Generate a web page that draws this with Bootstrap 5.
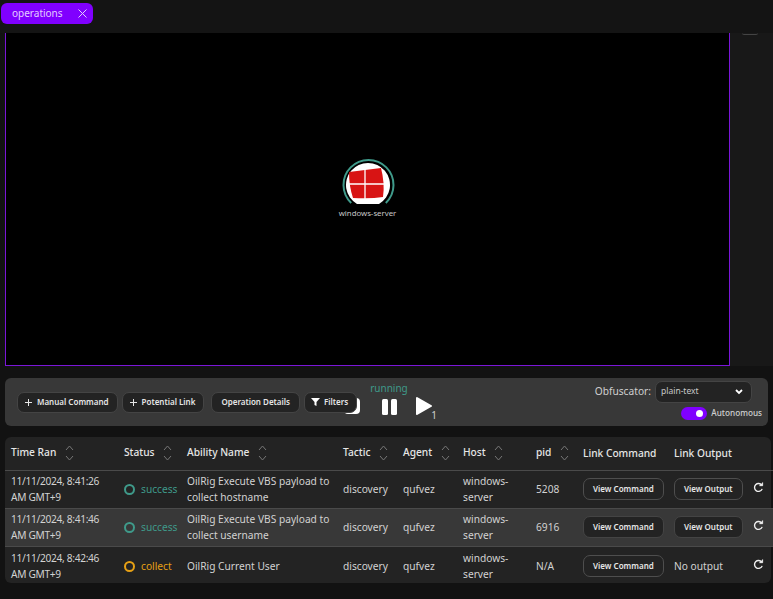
<!doctype html>
<html lang="en">
<head>
<meta charset="utf-8">
<title>operations</title>
<link href="https://cdn.jsdelivr.net/npm/bootstrap@5.3.3/dist/css/bootstrap.min.css" rel="stylesheet">
<style>
  html, body { height:100%; overflow:hidden; }
  body { background:#121212; color:#dbdbdb; font-family:"Noto Sans", "Liberation Sans", sans-serif; font-size:11px; }
  .top-strip { height:33px; background:#141414; padding:3px 0 0 1px; }
  .op-tab { width:92px; height:21px; background:#8000ff; color:#e4ccff; border-radius:6px; padding:0 6px 0 11px; font-size:10px; }
  .graph-row { height:333px; margin-left:5px; }
  .graph-canvas { width:725px; background:#000; border:solid #7a16d8; border-width:0 1px 1px 1px; }
  .graph-side { flex:1; background:#181818; }
  .side-nub { width:16px; height:2px; margin-left:12px; border-bottom:1px solid #444; border-radius:0 0 8px 8px; }
  .node-label { font-size:7.8px; color:#c8c8c8; line-height:10px; margin-top:3px; }
  .node-box { margin-top:-22px; }
  .ctl-panel { margin:12px 5px 0 5px; height:48px; background:#383838; border-radius:6px; padding:0 6px 0 12px; }
  .ctl-btn { position:relative; z-index:1; background:#232323; border:1px solid #444; border-radius:7px; color:#e6e6e6; height:21px; font-size:8px; font-weight:600; padding:0 8px 0 6px; line-height:1; }
  .ctl-btn.plain { padding:0 9px; margin-left:3px; }
  .run-box { position:relative; width:100px; height:48px; }
  .run-text { position:absolute; left:13px; top:4px; color:#3f9a8a; font-size:10px; line-height:13px; }
  .run-sq { position:absolute; left:-13px; top:20px; width:16px; height:16px; background:#fff; border-radius:4px; }
  .run-pause { position:absolute; left:25px; top:21px; }
  .run-play { position:absolute; left:58px; top:18px; }
  .run-num { position:absolute; left:74px; top:31px; font-size:10px; line-height:13px; color:#cfcfcf; }
  .obf-col { padding-bottom:4px; }
  .obf-label { color:#cfcfcf; font-size:10.2px; }
  .obf-select { width:97px; height:22px; margin-right:10px; background:#232323; border:1px solid #444; border-radius:7px; color:#c9c9c9; font-size:8.5px; padding:0 8px 0 5px; }
  .auto-switch { width:26px; height:13px; background:#8000ff; border-radius:7px; position:relative; }
  .auto-switch::after { content:""; position:absolute; right:4px; top:3px; width:7px; height:7px; background:#fff; border-radius:50%; }
  .auto-label { font-size:8.2px; font-weight:500; color:#d0d0d0; }
  .tbl-wrap { margin:11px 2px 0 5px; background:#232323; border-radius:6px; height:146px; }
  .tbl-grid { width:768px; table-layout:fixed; border-collapse:collapse; color:#d2d2d2; font-size:10.2px; line-height:16px; }
  .tbl-grid th { height:33px; padding:0 0 0 6px; color:#e6e6e6; font-weight:500; border-bottom:1px solid #4a4a4a; white-space:nowrap; }
  .tbl-grid td { height:38px; padding:0 0 0 6px; border-bottom:1px solid #4a4a4a; }
  .tbl-grid tr:last-child td { height:40px; border-bottom:0; }
  .row-hover td { background:#383838; }
  .date-cell { letter-spacing:-.32px; }
  .sort-ico { display:inline-block; vertical-align:middle; margin-left:6px; }
  .stat-dot { display:inline-block; width:11px; height:11px; border-radius:50%; border:2.5px solid; margin-right:6px; vertical-align:-2px; }
  .stat-ok { color:#3f9a8a; }
  .stat-col { color:#e6a015; }
  .view-btn { background:#232323; border:1px solid #4e4e4e; border-radius:7px; color:#e6e6e6; height:22px; font-size:8px; font-weight:600; padding:0 9px; line-height:1; }
  .row-hover .view-btn { border-color:#444; }
  .redo-ico { display:block; margin-top:-3px; }
</style>
</head>
<body>

<div class="top-strip">
  <div class="op-tab d-flex align-items-center justify-content-between">
    <span>operations</span>
    <svg width="9" height="9" viewBox="0 0 9 9" fill="none" stroke="#e4ccff" stroke-width="1"><path d="M.5 .5l8 8M8.500 .5l-8 8"/></svg>
  </div>
</div>

<div class="graph-row d-flex">
  <div class="graph-canvas d-flex flex-column align-items-center justify-content-center">
    <div class="node-box d-flex flex-column align-items-center">
      <svg width="54" height="47" viewBox="0 0 54 47">
        <path d="M10.200 45A25 25 0 1 1 44.800 45" fill="none" stroke="#3f9a8a" stroke-width="2"/>
        <path d="M16 46A22 22 0 1 1 38 46Z" fill="#fff"/>
        <path d="M8 14L40 10Q44 25 42 39Q30 41 12 40Q8 28 8 14Z" fill="#d81414"/>
        <path d="M24 11V41M8 26H43" stroke="#fff" stroke-width="1.300"/>
      </svg>
      <div class="node-label">windows-server</div>
    </div>
  </div>
  <div class="graph-side"><div class="side-nub"></div></div>
</div>

<div class="ctl-panel d-flex align-items-center justify-content-between">
  <div class="d-flex align-items-center">
    <div class="d-flex gap-1 align-items-center">
      <button class="ctl-btn d-flex align-items-center gap-1"><svg width="9" height="9" viewBox="0 0 9 9" stroke="#e6e6e6" stroke-width="1"><path d="M4.500 1v7M1 4.500h7"/></svg>Manual Command</button>
      <button class="ctl-btn d-flex align-items-center gap-1"><svg width="9" height="9" viewBox="0 0 9 9" stroke="#e6e6e6" stroke-width="1"><path d="M4.500 1v7M1 4.500h7"/></svg>Potential Link</button>
      <button class="ctl-btn plain">Operation Details</button>
      <button class="ctl-btn d-flex align-items-center gap-1"><svg width="9" height="8" viewBox="0 0 9 8" fill="#fff"><path d="M0 0h9L5.500 4V8L3.500 7V4Z"/></svg>Filters</button>
    </div>
    <div class="run-box">
      <div class="run-sq"></div>
      <div class="run-text">running</div>
      <svg class="run-pause" width="15" height="16" viewBox="0 0 15 16" fill="#fff"><rect x="0" y="0" width="6" height="16" rx="1.500"/><rect x="9" y="0" width="6" height="16" rx="1.500"/></svg>
      <svg class="run-play" width="18" height="20" viewBox="0 0 18 20" fill="#fff" stroke="#fff" stroke-width="2" stroke-linejoin="round"><path d="M2 2L16 10L2 18Z"/></svg>
      <span class="run-num">1</span>
    </div>
  </div>
  <div class="obf-col d-flex flex-column align-items-end gap-1">
    <div class="d-flex align-items-center">
      <span class="obf-label me-1">Obfuscator:</span>
      <div class="obf-select d-flex align-items-center justify-content-between">
        <span>plain-text</span>
        <svg width="8" height="6" viewBox="0 0 8 6" fill="none" stroke="#fff" stroke-width="1.800"><path d="M1 1l3 3 3-3"/></svg>
      </div>
    </div>
    <div class="d-flex align-items-center gap-1">
      <div class="auto-switch"></div>
      <span class="auto-label">Autonomous</span>
    </div>
  </div>
</div>

<div class="tbl-wrap">
  <table class="tbl-grid">
    <colgroup>
      <col style="width:113px"><col style="width:63px"><col style="width:156px"><col style="width:60px"><col style="width:60px"><col style="width:73px"><col style="width:47px"><col style="width:91px"><col style="width:79px"><col style="width:26px">
    </colgroup>
    <thead>
      <tr>
        <th>Time Ran <svg class="sort-ico" width="9" height="18" viewBox="0 0 9 18" fill="none" stroke="#777" stroke-width="1"><path d="M1 6l3.500-4L8 6M1 12l3.500 4L8 12"/></svg></th>
        <th>Status <svg class="sort-ico" width="9" height="18" viewBox="0 0 9 18" fill="none" stroke="#777" stroke-width="1"><path d="M1 6l3.500-4L8 6M1 12l3.500 4L8 12"/></svg></th>
        <th>Ability Name <svg class="sort-ico" width="9" height="18" viewBox="0 0 9 18" fill="none" stroke="#777" stroke-width="1"><path d="M1 6l3.500-4L8 6M1 12l3.500 4L8 12"/></svg></th>
        <th>Tactic <svg class="sort-ico" width="9" height="18" viewBox="0 0 9 18" fill="none" stroke="#777" stroke-width="1"><path d="M1 6l3.500-4L8 6M1 12l3.500 4L8 12"/></svg></th>
        <th>Agent <svg class="sort-ico" width="9" height="18" viewBox="0 0 9 18" fill="none" stroke="#777" stroke-width="1"><path d="M1 6l3.500-4L8 6M1 12l3.500 4L8 12"/></svg></th>
        <th>Host <svg class="sort-ico" width="9" height="18" viewBox="0 0 9 18" fill="none" stroke="#777" stroke-width="1"><path d="M1 6l3.500-4L8 6M1 12l3.500 4L8 12"/></svg></th>
        <th>pid <svg class="sort-ico" width="9" height="18" viewBox="0 0 9 18" fill="none" stroke="#777" stroke-width="1"><path d="M1 6l3.500-4L8 6M1 12l3.500 4L8 12"/></svg></th>
        <th>Link Command</th>
        <th>Link Output</th>
        <th></th>
      </tr>
    </thead>
    <tbody>
      <tr>
        <td class="date-cell">11/11/2024, 8:41:26<br>AM GMT+9</td>
        <td><span class="stat-ok"><span class="stat-dot"></span>success</span></td>
        <td>OilRig Execute VBS payload to collect hostname</td>
        <td>discovery</td><td>qufvez</td><td>windows-server</td><td>5208</td>
        <td><button class="view-btn">View Command</button></td>
        <td><button class="view-btn">View Output</button></td>
        <td><svg class="redo-ico" width="11" height="11" viewBox="0 0 12 12" fill="none" stroke="#eee" stroke-width="1.500"><path d="M10 7.500A4.300 4.300 0 1 1 9.500 3.500"/><path d="M10.500 .5V4H7" fill="#eee" stroke-width="1"/></svg></td>
      </tr>
      <tr class="row-hover">
        <td class="date-cell">11/11/2024, 8:41:46<br>AM GMT+9</td>
        <td><span class="stat-ok"><span class="stat-dot"></span>success</span></td>
        <td>OilRig Execute VBS payload to collect username</td>
        <td>discovery</td><td>qufvez</td><td>windows-server</td><td>6916</td>
        <td><button class="view-btn">View Command</button></td>
        <td><button class="view-btn">View Output</button></td>
        <td><svg class="redo-ico" width="11" height="11" viewBox="0 0 12 12" fill="none" stroke="#eee" stroke-width="1.500"><path d="M10 7.500A4.300 4.300 0 1 1 9.500 3.500"/><path d="M10.500 .5V4H7" fill="#eee" stroke-width="1"/></svg></td>
      </tr>
      <tr>
        <td class="date-cell">11/11/2024, 8:42:46<br>AM GMT+9</td>
        <td><span class="stat-col"><span class="stat-dot"></span>collect</span></td>
        <td>OilRig Current User</td>
        <td>discovery</td><td>qufvez</td><td>windows-server</td><td>N/A</td>
        <td><button class="view-btn">View Command</button></td>
        <td>No output</td>
        <td><svg class="redo-ico" width="11" height="11" viewBox="0 0 12 12" fill="none" stroke="#eee" stroke-width="1.500"><path d="M10 7.500A4.300 4.300 0 1 1 9.500 3.500"/><path d="M10.500 .5V4H7" fill="#eee" stroke-width="1"/></svg></td>
      </tr>
    </tbody>
  </table>
</div>

<script src="https://cdn.jsdelivr.net/npm/bootstrap@5.3.3/dist/js/bootstrap.bundle.min.js"></script>
</body>
</html>
